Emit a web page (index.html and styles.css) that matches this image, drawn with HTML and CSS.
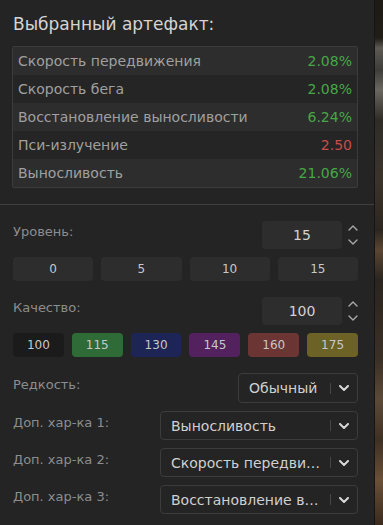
FILE: index.html
```html
<!DOCTYPE html>
<html lang="ru">
<head>
  <meta charset="UTF-8" />
  <meta name="viewport" content="width=device-width, initial-scale=1.0" />
  <title>Выбранный артефакт</title>
  <link rel="stylesheet" href="styles.css">
</head>
<body>
  <div class="page">
    <div class="panel">
      <div class="artifact">
        <h2 class="title">Выбранный артефакт:</h2>
        <div class="stats">
          <div class="stat"><span>Скорость передвижения</span><span class="pos">2.08%</span></div>
          <div class="stat"><span>Скорость бега</span><span class="pos">2.08%</span></div>
          <div class="stat"><span>Восстановление выносливости</span><span class="pos">6.24%</span></div>
          <div class="stat"><span>Пси-излучение</span><span class="neg">2.50</span></div>
          <div class="stat"><span>Выносливость</span><span class="pos">21.06%</span></div>
        </div>
      </div>

      <div class="settings">
        <div class="field">
          <label>Уровень:</label>
          <div class="number">
            <div class="number-box">15</div>
            <div class="spin">
              <svg viewBox="0 0 10 6" width="10" height="6"><path d="M1 5 L5 1 L9 5" /></svg>
              <svg viewBox="0 0 10 6" width="10" height="6"><path d="M1 1 L5 5 L9 1" /></svg>
            </div>
          </div>
        </div>
        <div class="presets four">
          <button>0</button>
          <button>5</button>
          <button>10</button>
          <button>15</button>
        </div>

        <div class="field">
          <label>Качество:</label>
          <div class="number">
            <div class="number-box">100</div>
            <div class="spin">
              <svg viewBox="0 0 10 6" width="10" height="6"><path d="M1 5 L5 1 L9 5" /></svg>
              <svg viewBox="0 0 10 6" width="10" height="6"><path d="M1 1 L5 5 L9 1" /></svg>
            </div>
          </div>
        </div>
        <div class="presets six">
          <button class="q100">100</button>
          <button class="q115">115</button>
          <button class="q130">130</button>
          <button class="q145">145</button>
          <button class="q160">160</button>
          <button class="q175">175</button>
        </div>

        <div class="field select-field">
          <label>Редкость:</label>
          <div class="select short">
            <span class="value">Обычный</span>
            <span class="bar"></span>
            <svg viewBox="0 0 10 6" width="10" height="6"><path d="M1 1 L5 5 L9 1" /></svg>
          </div>
        </div>
        <div class="field select-field">
          <label>Доп. хар-ка 1:</label>
          <div class="select">
            <span class="value">Выносливость</span>
            <span class="bar"></span>
            <svg viewBox="0 0 10 6" width="10" height="6"><path d="M1 1 L5 5 L9 1" /></svg>
          </div>
        </div>
        <div class="field select-field">
          <label>Доп. хар-ка 2:</label>
          <div class="select">
            <span class="value">Скорость передвижения</span>
            <span class="bar"></span>
            <svg viewBox="0 0 10 6" width="10" height="6"><path d="M1 1 L5 5 L9 1" /></svg>
          </div>
        </div>
        <div class="field select-field">
          <label>Доп. хар-ка 3:</label>
          <div class="select">
            <span class="value">Восстановление выносливости</span>
            <span class="bar"></span>
            <svg viewBox="0 0 10 6" width="10" height="6"><path d="M1 1 L5 5 L9 1" /></svg>
          </div>
        </div>
      </div>
    </div>
    <div class="backdrop"></div>
  </div>
</body>
</html>
```

FILE: styles.css
```css
body { margin: 0; padding: 0; background: #1b1916; font-family: 'DejaVu Sans', 'Noto Sans', sans-serif; color: #cfcfcf; }
.page { display: flex; width: 383px; height: 525px; overflow: hidden; }
.panel { width: 374px; height: 525px; background: #242424; border-right: 1px solid #151515; flex-shrink: 0; }
.backdrop { flex: 1; background: linear-gradient(180deg, #1e1b17 0px, #201c18 38px, #5d5a55 48px, #3f3d3a 70px, #6a6761 90px, #2f2c28 120px, #3a342c 180px, #2c2620 230px, #5a4632 250px, #2a2520 280px, #3b3026 360px, #5b4a38 400px, #3e3024 440px, #6a5036 480px, #3a2a1e 525px); }

.artifact { padding: 14px 16px 16px 12px; border-bottom: 1px solid #404040; }
.title { margin: 0 0 12px 1px; font-size: 17px; line-height: 20px; font-weight: 400; color: #d4d4d4; }
.stats { border: 1px solid #3b3b3b; border-radius: 2px; }
.stat { display: flex; justify-content: space-between; align-items: center; height: 28px; padding: 0 5px 0 5px; font-size: 14px; color: #a0a0a0; background: #2d2d2d; }
.stat:nth-child(even) { background: #252525; }
.stat .pos { color: #45a845; }
.stat .neg { color: #c84d4a; }

.settings { padding: 16px 16px 0 13px; }
.field { display: flex; justify-content: space-between; align-items: center; }
.field label { font-size: 13px; color: #8d8d8d; margin-bottom: 7px; }
.number { display: flex; align-items: center; }
.number-box { width: 80px; height: 28px; line-height: 28px; text-align: center; background: #2d2d2d; border-radius: 4px; font-size: 14px; color: #d2d2d2; }
.spin { width: 16px; display: flex; flex-direction: column; align-items: flex-end; gap: 8px; }
.spin svg path { fill: none; stroke: #a8a8a8; stroke-width: 1.4; stroke-linecap: round; stroke-linejoin: round; }

.presets { display: grid; gap: 8px; margin: 8px 0 16px 0; }
.presets.four { grid-template-columns: repeat(4, 1fr); }
.presets.six { grid-template-columns: repeat(6, 1fr); }
.presets button { height: 24px; border: none; border-radius: 4px; background: #2d2d2d; color: #c8c8c8; font-family: inherit; font-size: 12px; padding: 0; }
.presets .q100 { background: #1b1b1b; }
.presets .q115 { background: #2f6b36; }
.presets .q130 { background: #1d2456; }
.presets .q145 { background: #53215d; }
.presets .q160 { background: #6a3532; }
.presets .q175 { background: #6c6226; }

.select-field { margin-bottom: 8px; }
.select { width: 198px; height: 29px; box-sizing: border-box; border: 1px solid #3c3c3c; border-radius: 4px; display: flex; align-items: center; padding: 0 8px 0 10px; font-size: 14px; color: #d0d0d0; }
.select.short { width: 120px; height: 30px; }
.select .value { flex: 1; white-space: nowrap; overflow: hidden; text-overflow: ellipsis; }
.select .bar { width: 1px; height: 11px; background: #464646; margin: 0 8px 0 6px; }
.select svg path { fill: none; stroke: #d8d8d8; stroke-width: 2; stroke-linecap: round; stroke-linejoin: round; }
```
